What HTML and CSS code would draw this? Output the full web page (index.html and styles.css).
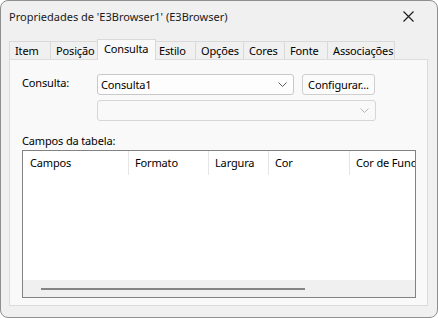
FILE: index.html
```html
<!DOCTYPE html>
<html lang="pt">
<head>
  <meta charset="UTF-8" />
  <title>Propriedades de 'E3Browser1' (E3Browser)</title>
  <link rel="stylesheet" href="styles.css">
</head>
<body>
  <div class="window">
    <div class="titlebar">
      <span class="title">Propriedades de 'E3Browser1' (E3Browser)</span>
      <svg class="close" width="11" height="11" viewBox="0 0 11 11">
        <path d="M0.5 0.5L10.5 10.5M10.5 0.5L0.5 10.5" stroke="#1a1a1a" stroke-width="1.1" fill="none"/>
      </svg>
    </div>

    <div class="tabs">
      <div class="tab t-item">Item</div>
      <div class="tab t-pos">Posição</div>
      <div class="tab t-cons active">Consulta</div>
      <div class="tab t-est">Estilo</div>
      <div class="tab t-opc">Opções</div>
      <div class="tab t-cor">Cores</div>
      <div class="tab t-fon">Fonte</div>
      <div class="tab t-ass">Associações</div>
    </div>

    <div class="panel">
      <div class="form">
        <label class="lbl">Consulta:</label>
        <div class="row">
          <div class="combo combo-main">
            <span>Consulta1</span>
            <svg width="9" height="5" viewBox="0 0 9 5"><path d="M0.5 0.5L4.5 4.5L8.5 0.5" stroke="#5a5a5a" fill="none"/></svg>
          </div>
          <div class="btn">Configurar...</div>
        </div>
        <span></span>
        <div class="combo combo-off">
          <span></span>
          <svg width="9" height="5" viewBox="0 0 9 5"><path d="M0.5 0.5L4.5 4.5L8.5 0.5" stroke="#b8b8b8" fill="none"/></svg>
        </div>
      </div>

      <div class="caption">Campos da tabela:</div>

      <div class="list">
        <div class="header">
          <div class="col c1">Campos</div>
          <div class="col c2">Formato</div>
          <div class="col c3">Largura</div>
          <div class="col c4">Cor</div>
          <div class="col c5">Cor de Fundo</div>
        </div>
        <div class="body"></div>
        <div class="hscroll">
          <div class="thumb"></div>
        </div>
      </div>
    </div>
  </div>
</body>
</html>
```

FILE: styles.css
```css
body {
  margin: 0;
  background: #ffffff;
  font-family: 'Noto Sans', 'Open Sans', sans-serif;
  font-size: 11px;
  letter-spacing: -0.15px;
  color: #000;
}

.window {
  width: 438px;
  height: 318px;
  box-sizing: border-box;
  border: 1px solid #8f8f8f;
  border-radius: 8px;
  background: #f0f0f0;
  display: flex;
  flex-direction: column;
  overflow: hidden;
}

.titlebar {
  height: 30px;
  display: flex;
  align-items: center;
  justify-content: space-between;
  padding: 0 23px 0 8px;
  flex-shrink: 0;
}

.title {
  font-size: 11px;
  letter-spacing: 0;
  color: #1a1a1a;
}

.tabs {
  display: flex;
  align-items: flex-end;
  height: 28px;
  margin-left: 8px;
  position: relative;
  z-index: 1;
}

.tab {
  height: 18px;
  line-height: 17px;
  box-sizing: border-box;
  padding-left: 5px;
  border: 1px solid #d9d9d9;
  border-bottom: none;
  margin-right: -1px;
  background: #f0f0f0;
  white-space: nowrap;
  overflow: hidden;
}

.t-item { width: 42px; }
.t-pos { width: 49px; }
.t-est { width: 42px; padding-left: 4px; }
.t-opc { width: 49px; }
.t-cor { width: 42px; }
.t-fon { width: 44px; }
.t-ass { width: 68px; }

.tab.active {
  width: 59px;
  height: 21px;
  line-height: 18px;
  background: #f9f9f9;
  margin: 0 -2px -1px -1px;
  padding-left: 6px;
  position: relative;
  z-index: 2;
}

.panel {
  flex: 1;
  margin: 0 9px 11px 8px;
  border: 1px solid #dcdcdc;
  background: #f9f9f9;
  padding: 14px 0 0 12px;
  display: flex;
  flex-direction: column;
}

.form {
  display: grid;
  grid-template-columns: 75px auto;
  row-gap: 5px;
}

.lbl {
  padding-top: 1px;
}

.row {
  display: flex;
  gap: 8px;
}

.combo {
  height: 21px;
  box-sizing: border-box;
  border: 1px solid #c8c8c8;
  border-radius: 3px;
  background: #fdfdfd;
  display: flex;
  align-items: center;
  justify-content: space-between;
  padding: 0 6px 0 3px;
}

.combo-main { width: 197px; }

.combo-off {
  width: 279px;
  border-color: #d6d6d6;
  background: #f9f9f9;
}

.btn {
  width: 73px;
  height: 21px;
  box-sizing: border-box;
  border: 1px solid #cfcfcf;
  border-radius: 3px;
  background: #fbfbfb;
  text-align: center;
  line-height: 19px;
}

.caption {
  margin-top: 12px;
  height: 17px;
}

.list {
  width: 394px;
  height: 148px;
  box-sizing: border-box;
  border: 1px solid #828282;
  background: #fff;
  display: flex;
  flex-direction: column;
  overflow: hidden;
}

.header {
  display: flex;
  height: 24px;
  flex-shrink: 0;
}

.col {
  padding-left: 6px;
  line-height: 24px;
  border-right: 1px solid #e5e5e5;
  white-space: nowrap;
  overflow: hidden;
  box-sizing: border-box;
  flex-shrink: 0;
}

.c1 { width: 106px; padding-left: 7px; }
.c2 { width: 80px; }
.c3 { width: 60px; }
.c4 { width: 81px; }
.c5 { width: 80px; border-right: none; }

.body { flex: 1; }

.hscroll {
  height: 17px;
  background: #f0f0f0;
  display: flex;
  align-items: center;
  padding-left: 18px;
}

.thumb {
  width: 264px;
  height: 2px;
  background: #858585;
}
```
